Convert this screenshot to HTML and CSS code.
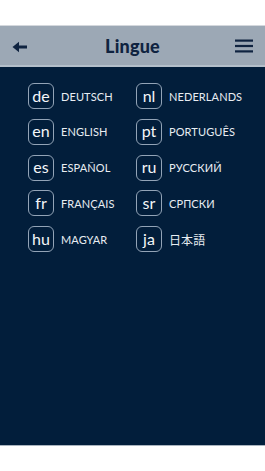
FILE: index.html
```html
<!DOCTYPE html>
<html>
<head>
<meta charset="utf-8">
<link rel="stylesheet" href="styles.css">
</head>
<body>
<div class="screen">
  <div class="status"></div>
  <header class="topbar">
    <button class="icon-btn back" aria-label="Indietro">
      <svg width="16" height="12" viewBox="0 0 16 12"><path d="M15 6H4" stroke="#0f2340" stroke-width="3" fill="none"/><path d="M0.5 6L7 0.8V11.2Z" fill="#0f2340"/></svg>
    </button>
    <h1 class="title">Lingue</h1>
    <button class="icon-btn menu" aria-label="Menu">
      <svg width="18" height="14" viewBox="0 0 18 14"><rect x="0" y="0.5" width="18" height="2.2" fill="#0f2340"/><rect x="0" y="5.9" width="18" height="2.2" fill="#0f2340"/><rect x="0" y="11.3" width="18" height="2.2" fill="#0f2340"/></svg>
    </button>
  </header>
  <main class="content">
    <ul class="langs">
      <li class="lang"><span class="code">de</span><span class="name">DEUTSCH</span></li>
      <li class="lang"><span class="code">nl</span><span class="name">NEDERLANDS</span></li>
      <li class="lang"><span class="code">en</span><span class="name">ENGLISH</span></li>
      <li class="lang"><span class="code">pt</span><span class="name">PORTUGUÊS</span></li>
      <li class="lang"><span class="code">es</span><span class="name">ESPAÑOL</span></li>
      <li class="lang"><span class="code">ru</span><span class="name">РУССКИЙ</span></li>
      <li class="lang"><span class="code">fr</span><span class="name">FRANÇAIS</span></li>
      <li class="lang"><span class="code">sr</span><span class="name">СРПСКИ</span></li>
      <li class="lang"><span class="code">hu</span><span class="name">MAGYAR</span></li>
      <li class="lang"><span class="code">ja</span><span class="name cjk">日本語</span></li>
    </ul>
  </main>
  <div class="bottom"></div>
</div>
</body>
</html>
```
FILE: styles.css
```css
* { box-sizing: border-box; }
html, body { margin: 0; padding: 0; }
body {
  background: #ffffff;
  font-family: Lato, "Open Sans", "Noto Sans CJK JP", sans-serif;
}
.screen {
  width: 265px;
  height: 471px;
  display: flex;
  flex-direction: column;
}
.status {
  height: 26px;
  background: #ffffff;
  border-bottom: 1px solid #d4d8dd;
}
.topbar {
  height: 41px;
  background: #9ca8b5;
  border-bottom: 2px solid #b4bfca;
  display: flex;
  align-items: center;
  justify-content: space-between;
  padding: 0 12px 0 12px;
}
.icon-btn {
  background: none;
  border: 0;
  padding: 0;
  display: flex;
  align-items: center;
  width: 18px;
}
.back { margin-top: 2px; }
.title {
  margin: 0;
  font-size: 18px;
  font-weight: 900;
  color: #0f2340;
  letter-spacing: 0.2px;
}
.content {
  flex: 1;
  background: #021e3b;
  padding: 16px 0 0 28px;
}
.langs {
  list-style: none;
  margin: 0;
  padding: 0;
  display: grid;
  grid-template-columns: 108px 108px;
  row-gap: 9.75px;
}
.lang {
  display: flex;
  align-items: center;
  gap: 7px;
}
.code {
  width: 26px;
  height: 26px;
  border: 1px solid #93a4b7;
  border-radius: 6px;
  display: flex;
  align-items: center;
  justify-content: center;
  color: #f4f6f9;
  font-size: 16px;
  font-weight: 400;
  line-height: 1;
  padding-bottom: 1px;
}
.name {
  color: #e8edf2;
  font-size: 11px;
  letter-spacing: 0.1px;
}
.name.cjk {
  font-family: "Noto Sans CJK JP", sans-serif;
  font-size: 12px;
}
.bottom {
  height: 26px;
  background: #ffffff;
  border-top: 1px solid #a9b4bf;
}
```
